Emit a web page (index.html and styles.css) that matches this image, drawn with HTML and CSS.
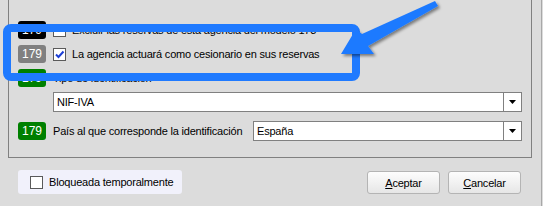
FILE: index.html
```html
<!DOCTYPE html>
<html lang="es">
<head>
<meta charset="utf-8">
<link rel="stylesheet" href="styles.css">
</head>
<body>
<div class="frame">
  <div class="group">
    <div class="row">
      <span class="badge black">179</span>
      <span class="check"></span>
      <span class="label">Excluir las reservas de esta agencia del modelo 173</span>
    </div>
    <div class="row">
      <span class="badge gray">179</span>
      <span class="check"><svg width="11" height="11" viewBox="0 0 11 11"><path d="M2 5.5 L4.5 8 L9.5 2.5" fill="none" stroke="#1c3fd6" stroke-width="2"/></svg></span>
      <span class="label">La agencia actuará como cesionario en sus reservas</span>
    </div>
    <div class="row">
      <span class="badge green">179</span>
      <span class="label">Tipo de identificación</span>
    </div>
    <div class="row combo-row">
      <div class="combo wide">
        <span class="combo-text">NIF-IVA</span>
        <span class="combo-btn"><svg width="7" height="4" viewBox="0 0 7 4"><polygon points="0,0 7,0 3.5,4" fill="#000"/></svg></span>
      </div>
    </div>
    <div class="row last">
      <span class="badge green">179</span>
      <span class="label fixed">País al que corresponde la identificación</span>
      <div class="combo narrow">
        <span class="combo-text">España</span>
        <span class="combo-btn"><svg width="7" height="4" viewBox="0 0 7 4"><polygon points="0,0 7,0 3.5,4" fill="#000"/></svg></span>
      </div>
    </div>
  </div>
  <div class="footer">
    <div class="toggle">
      <span class="check"></span>
      <span class="label">Bloqueada temporalmente</span>
    </div>
    <div class="buttons">
      <button class="btn"><u>A</u>ceptar</button>
      <button class="btn"><u>C</u>ancelar</button>
    </div>
  </div>
</div>
<svg class="annot" width="543" height="206" viewBox="0 0 543 206">
  <defs>
    <filter id="sh" x="-20%" y="-20%" width="140%" height="140%">
      <feDropShadow dx="2" dy="2" stdDeviation="1.5" flood-color="#000" flood-opacity="0.45"/>
    </filter>
  </defs>
  <rect x="7" y="28" width="349" height="49" rx="4" fill="none" stroke="#1f7aff" stroke-width="8"/>
  <polygon points="341,54 356,29 362,34 435,1 438,6 368,46 374,54" fill="#1f7aff" filter="url(#sh)"/>
</svg>
</body>
</html>
```
FILE: styles.css
```css
html, body {
  margin: 0;
  padding: 0;
}
body {
  background: #dcdcdc;
  width: 543px;
  height: 206px;
  overflow: hidden;
  position: relative;
  font-family: "Liberation Sans", Arial, sans-serif;
  font-size: 11px;
  letter-spacing: -0.2px;
  color: #000;
}
.frame {
  width: 541px;
  height: 206px;
  border-right: 1px solid #a8a8a8;
}
.group {
  margin-left: 8px;
  width: 524px;
  height: 158px;
  box-sizing: border-box;
  border: 1px solid #808080;
  border-top: none;
  padding: 21px 0 0 9px;
  display: flex;
  flex-direction: column;
}
.row {
  display: flex;
  align-items: center;
  height: 18px;
  margin-bottom: 6px;
}
.row.combo-row {
  height: 20px;
  margin-top: -1px;
  margin-bottom: 9px;
  padding-left: 35px;
}
.row.last {
  height: 20px;
}
.badge {
  width: 28px;
  height: 18px;
  border-radius: 3px;
  color: #fff;
  font-size: 12px;
  letter-spacing: 0;
  display: flex;
  align-items: center;
  justify-content: center;
  flex: 0 0 auto;
  margin-right: 7px;
}
.badge.black { background: #000; }
.badge.gray { background: #808080; }
.badge.green { background: #008000; }
.check {
  width: 13px;
  height: 13px;
  box-sizing: border-box;
  border: 1px solid #5a5a5a;
  background: #fff;
  display: flex;
  align-items: center;
  justify-content: center;
  flex: 0 0 auto;
  margin-right: 6px;
}
.label {
  white-space: nowrap;
}
.fixed {
  width: 200px;
  flex: 0 0 200px;
}
.combo {
  height: 20px;
  box-sizing: border-box;
  border: 1px solid #808080;
  background: #fff;
  display: flex;
  align-items: stretch;
}
.combo.wide { width: 469px; }
.combo.narrow { width: 269px; }
.combo-text {
  flex: 1;
  display: flex;
  align-items: center;
  padding-left: 3px;
}
.combo-btn {
  width: 17px;
  border-left: 1px solid #808080;
  display: flex;
  align-items: center;
  justify-content: center;
}
.footer {
  display: flex;
  justify-content: space-between;
  align-items: flex-start;
  padding: 12px 20px 0 18px;
}
.toggle {
  width: 164px;
  height: 24px;
  box-sizing: border-box;
  background: #f1f1fb;
  border-radius: 3px;
  display: flex;
  align-items: center;
  padding-left: 12px;
}
.buttons {
  display: flex;
  gap: 8px;
  margin-top: 1px;
}
.btn {
  width: 73px;
  height: 23px;
  box-sizing: border-box;
  border: 1px solid #b4b4b4;
  border-radius: 3px;
  background: linear-gradient(#fdfdfd, #e6e6e6);
  font-family: "Liberation Sans", Arial, sans-serif;
  font-size: 11px;
  letter-spacing: -0.2px;
  color: #000;
  padding: 0;
}
.annot {
  position: absolute;
  left: 0;
  top: 0;
  pointer-events: none;
}
```
